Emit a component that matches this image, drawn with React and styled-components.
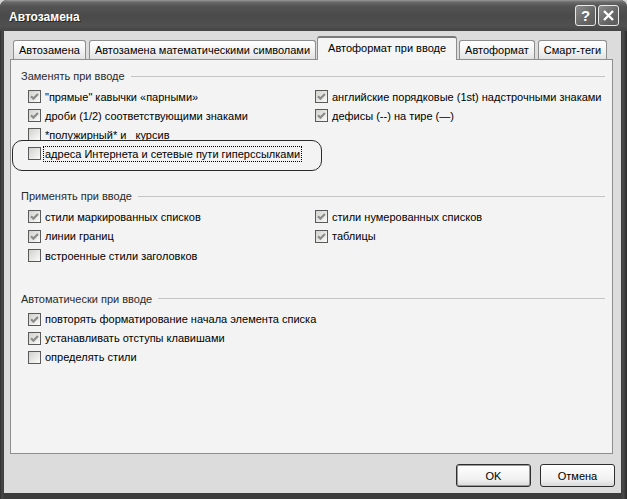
import React from "react";
import styled, { createGlobalStyle, css } from "styled-components";

const Global = createGlobalStyle`
  html, body { margin: 0; padding: 0; background: #d4d4d4; }
  body { font-family: "Liberation Sans", Arial, sans-serif; }
  * { box-sizing: border-box; }
`;

const Window = styled.div`
  width: 627px;
  height: 499px;
  display: flex;
  flex-direction: column;
  background: linear-gradient(90deg, #2e2e2e 0, #4a4a4a 2px, #3c3c3c 4px, #3c3c3c 621px, #4c4c4c 623px, #2a2a2a 627px);
  border-radius: 7px 7px 0 0;
  overflow: hidden;
`;

const TitleBar = styled.div`
  height: 31px;
  flex: none;
  display: flex;
  align-items: center;
  padding: 0 8px 0 9px;
  background: linear-gradient(#9a9a9a 0, #6a6a6a 2px, #545454 6px, #4a4a4a 16px, #505050 26px, #444 31px);
`;

const Title = styled.div`
  flex: 1;
  color: #fff;
  font-weight: bold;
  font-size: 12px;
  text-shadow: 1px 1px 0 #222;
  padding-top: 3px;
`;

const CaptionButton = styled.div`
  width: 21px;
  height: 21px;
  margin-left: 2px;
  border: 1px solid #e8e8e8;
  border-radius: 3px;
  background: linear-gradient(135deg, #8c8c8c, #666 60%, #5a5a5a);
  display: flex;
  align-items: center;
  justify-content: center;
  color: #fff;
  font-weight: bold;
  font-size: 15px;
  line-height: 1;
`;

const Body = styled.div`
  flex: 1;
  margin: 0 6px 6px 4px;
  background: #dcdcdc;
  padding: 5px 6px 6px 6px;
  display: flex;
  flex-direction: column;
`;

const TabStrip = styled.div`
  height: 23px;
  flex: none;
  display: flex;
  align-items: flex-end;
  padding-left: 3px;
  position: relative;
  z-index: 1;
`;

const Tab = styled.div`
  height: 19px;
  margin-right: 3px;
  padding: 0 5px;
  border: 1px solid #8e8e8e;
  border-bottom: none;
  border-radius: 3px 3px 0 0;
  background: linear-gradient(#ffffff, #f1f1f1 60%, #e2e2e2);
  font-size: 11px;
  color: #000;
  display: flex;
  align-items: center;
  white-space: nowrap;
  ${(p) =>
    p.$active &&
    css`
      height: 24px;
      margin: 0 2px -1px -2px;
      padding: 0 10px 2px;
      background: #f5f5f5;
      border-top: 2px solid #7a7a7a;
    `}
`;

const Panel = styled.div`
  flex: 1;
  margin-right: 2px;
  border: 1px solid #8e8e8e;
  background: #f3f3f3;
  padding: 6px 7px 0 10px;
  display: flex;
  flex-direction: column;
  gap: 23px;
`;

const Section = styled.div`
  display: flex;
  flex-direction: column;
`;

const Header = styled.div`
  height: 20px;
  display: flex;
  align-items: center;
  gap: 6px;
  font-size: 11px;
  color: #2a2a2a;
  &::after {
    content: "";
    flex: 1;
    height: 1px;
    background: #c4c4c4;
  }
`;

const Grid = styled.div`
  margin-top: 1px;
  padding-left: 7px;
  display: grid;
  grid-template-columns: 287px 1fr;
  grid-auto-rows: ${(p) => p.$rowH || 19}px;
`;

const Row = styled.div`
  position: relative;
  display: flex;
  align-items: center;
  gap: 3px;
  font-size: 11px;
  color: #000;
  white-space: pre;
  grid-column: ${(p) => (p.$col ? p.$col : "auto")};
  ${(p) =>
    p.$highlight &&
    css`
      &::after {
        content: "";
        position: absolute;
        left: -16px;
        right: -7px;
        top: -4px;
        bottom: -8px;
        border: 1.5px solid #2a2a2a;
        border-radius: 10px;
        pointer-events: none;
      }
    `}
`;

const Box = styled.span`
  width: 13px;
  height: 13px;
  flex: none;
  border: 1px solid #5a5a5a;
  background: linear-gradient(135deg, #d0d0cc 0%, #e8e8e6 55%, #fbfbfb 100%);
  display: flex;
  align-items: center;
  justify-content: center;
`;

const Label = styled.span`
  padding: 0 1px;
  line-height: 14px;
  ${(p) =>
    p.$focus &&
    css`
      outline: 1px dotted #000;
      outline-offset: 0;
    `}
`;

const ButtonRow = styled.div`
  flex: none;
  display: flex;
  justify-content: flex-end;
  gap: 9px;
  padding-top: 10px;
`;

const Button = styled.button`
  width: 75px;
  height: 23px;
  border: 1px solid #2e2e2e;
  border-radius: 3px;
  background: linear-gradient(#ffffff, #f0f0f0 70%, #d9d9d9);
  font-family: "Liberation Sans", Arial, sans-serif;
  font-size: 11px;
  color: #000;
  padding: 0;
  ${(p) =>
    p.$default &&
    css`
      box-shadow: inset 0 0 0 1px #9a9a9a;
    `}
`;

const Check = () => (
  <svg width="11" height="11" viewBox="0 0 11 11">
    <path d="M2 5.2 L4.4 7.6 L9 3" fill="none" stroke="#8c8c8c" strokeWidth="2.2" />
  </svg>
);

const CheckItem = ({ checked, children, focus, highlight, col }) => (
  <Row $highlight={highlight} $col={col}>
    <Box>{checked && <Check />}</Box>
    <Label $focus={focus}>{children}</Label>
  </Row>
);

export default function App() {
  return (
    <>
      <Global />
      <Window>
        <TitleBar>
          <Title>Автозамена</Title>
          <CaptionButton>?</CaptionButton>
          <CaptionButton>
            <svg width="13" height="13" viewBox="0 0 13 13">
              <path d="M2 2 L11 11 M11 2 L2 11" stroke="#fff" strokeWidth="2.4" />
            </svg>
          </CaptionButton>
        </TitleBar>
        <Body>
          <TabStrip>
            <Tab>Автозамена</Tab>
            <Tab>Автозамена математическими символами</Tab>
            <Tab $active>Автоформат при вводе</Tab>
            <Tab>Автоформат</Tab>
            <Tab>Смарт-теги</Tab>
          </TabStrip>
          <Panel>
            <Section>
              <Header>Заменять при вводе</Header>
              <Grid>
                <CheckItem checked>"прямые" кавычки «парными»</CheckItem>
                <CheckItem checked>английские порядковые (1st) надстрочными знаками</CheckItem>
                <CheckItem checked>дроби (1/2) соответствующими знаками</CheckItem>
                <CheckItem checked>дефисы (--) на тире (—)</CheckItem>
                <CheckItem col="1">*полужирный* и   курсив</CheckItem>
                <CheckItem col="1" focus highlight>
                  адреса Интернета и сетевые пути гиперссылками
                </CheckItem>
              </Grid>
            </Section>
            <Section>
              <Header>Применять при вводе</Header>
              <Grid $rowH={19.5}>
                <CheckItem checked>стили маркированных списков</CheckItem>
                <CheckItem checked>стили нумерованных списков</CheckItem>
                <CheckItem checked>линии границ</CheckItem>
                <CheckItem checked>таблицы</CheckItem>
                <CheckItem col="1">встроенные стили заголовков</CheckItem>
              </Grid>
            </Section>
            <Section>
              <Header>Автоматически при вводе</Header>
              <Grid>
                <CheckItem checked col="1 / span 2">повторять форматирование начала элемента списка</CheckItem>
                <CheckItem checked col="1 / span 2">устанавливать отступы клавишами</CheckItem>
                <CheckItem col="1 / span 2">определять стили</CheckItem>
              </Grid>
            </Section>
          </Panel>
          <ButtonRow>
            <Button $default>OK</Button>
            <Button>Отмена</Button>
          </ButtonRow>
        </Body>
      </Window>
    </>
  );
}
